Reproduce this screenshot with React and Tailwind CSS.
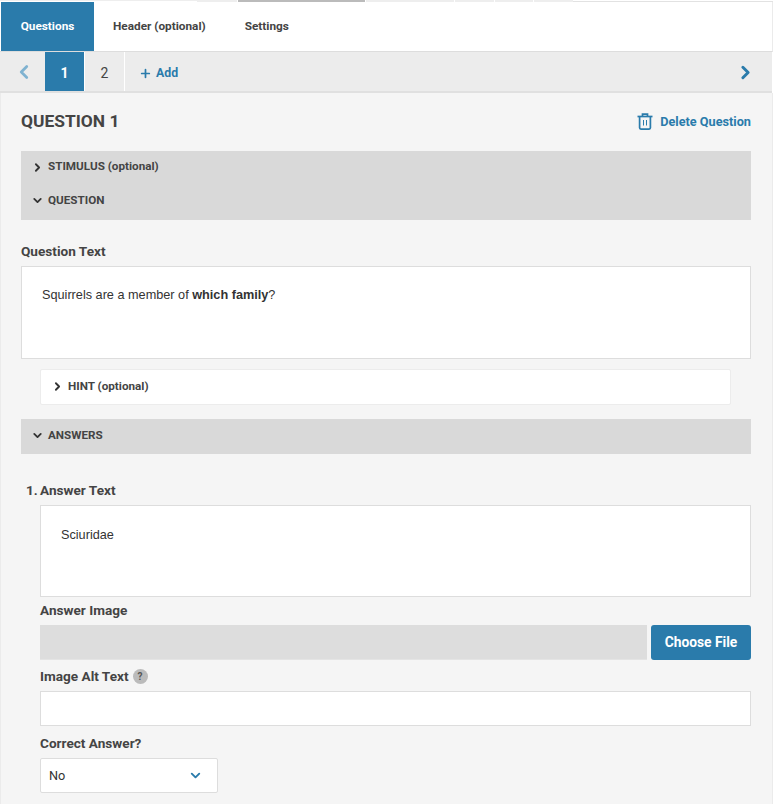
import React from "react";
import { ChevronLeft, ChevronRight, ChevronDown, Plus } from "lucide-react";

function Trash() {
  return (
    <svg width="16" height="17" viewBox="0 0 16 17" fill="none" stroke="#2a7bab" strokeWidth="1.7" className="shrink-0">
      <path d="M0.5 3.5h15" />
      <path d="M5.5 3.2V1.2h5v2" />
      <path d="M2.6 3.5v11.3a1.3 1.3 0 0 0 1.3 1.3h8.2a1.3 1.3 0 0 0 1.3-1.3V3.5" />
      <path d="M6.5 7v5.5M9.5 7v5.5" strokeWidth="1" />
    </svg>
  );
}

function Section({ open, children, className = "" }) {
  const Icon = open ? ChevronDown : ChevronRight;
  return (
    <div className={"flex items-center gap-[4px] pl-[10px] text-[11.7px] font-bold text-[#444] " + className}>
      <Icon size={13} strokeWidth={3.4} className="text-[#333]" />
      <span>{children}</span>
    </div>
  );
}

const label = "text-[13.6px] font-bold text-[#444] leading-[16px]";

export default function App() {
  return (
    <div className="w-[774px] h-[804px] overflow-hidden bg-white font-['Roboto',sans-serif]">
      <div className="flex h-[2px] w-[773px] items-start">
        <div className="w-[197px] h-[1px] bg-[#eeeeee]" />
        <div className="w-[40px] h-[2px] bg-[#eeeeee]" />
        <div className="w-[127px] h-[2px] ml-[1px] bg-[#bbbbbb]" />
        <div className="w-[88px] h-[2px] ml-[1px] bg-[#eeeeee]" />
        <div className="w-[39px] h-[2px] ml-[1px] bg-[#eeeeee]" />
        <div className="w-[38px] h-[2px] ml-[1px] bg-[#eeeeee]" />
        <div className="w-[39px] h-[2px] ml-[1px] bg-[#eeeeee]" />
        <div className="flex-1 h-[1px] mt-[1px] bg-[#e2e2e2]" />
      </div>
      <div className="flex h-[50px] w-[773px] border-b border-r border-b-[#dddddd] border-r-[#ebebeb] pl-[1px] text-[11.8px] font-bold">
        <div className="flex h-[49px] w-[93px] items-center justify-center bg-[#2a7bab] pt-[1px] text-white">Questions</div>
        <div className="flex h-[49px] items-center pl-[19px] pt-[1px] text-[#444]">Header (optional)</div>
        <div className="flex h-[49px] items-center pl-[39px] pt-[1px] text-[#444]">Settings</div>
      </div>
      <div className="flex h-[41px] w-[772px] items-stretch border-b-2 border-[#e0e0e0] bg-[#ececec]">
        <div className="flex w-[45px] items-center justify-center pt-[1px] pl-[3px]">
          <ChevronLeft size={22} strokeWidth={3} className="text-[#7fb2d0]" />
        </div>
        <div className="flex w-[39px] items-center justify-center bg-[#2a7bab] pt-[3px] text-[14px] font-bold text-white">1</div>
        <div className="flex w-[41px] items-center justify-center border-x border-white pt-[3px] text-[14px] text-[#444]">2</div>
        <div className="flex items-center gap-[4px] pl-[14px] pt-[4px] text-[12.3px] font-bold text-[#2a7bab]">
          <Plus size={13} strokeWidth={3.2} />
          <span>Add</span>
        </div>
        <div className="ml-auto flex items-center pr-[16px] pt-[1px]">
          <ChevronRight size={21} strokeWidth={3.4} className="text-[#2a7bab]" />
        </div>
      </div>
      <div className="w-[773px] h-[711px] border-x border-[#ebebeb] bg-[#f5f5f5] pl-[20px] pr-[21px]">
        <div className="flex h-[58px] items-center justify-between">
          <h2 className="pb-[2px] text-[17.4px] font-bold text-[#444]">QUESTION 1</h2>
          <div className="flex items-center gap-[7px] text-[12.7px] font-bold text-[#2a7bab]">
            <Trash />
            <span>Delete Question</span>
          </div>
        </div>
        <div className="h-[69px] bg-[#d9d9d9] flex flex-col">
          <Section className="h-[32px]">STIMULUS (optional)</Section>
          <Section open className="h-[35px]">QUESTION</Section>
        </div>
        <div className={label + " mt-[23px]"}>Question Text</div>
        <div className="mt-[7px] h-[93px] border border-[#dddddd] bg-white px-[20px] pt-[20px] font-['Liberation_Sans',sans-serif] text-[12.7px] leading-[16px] text-[#333]">
          Squirrels are a member of <b>which family</b>?
        </div>
        <div className="ml-[19px] mr-[20px] mt-[10px] h-[36px] flex items-center rounded-[2px] border border-[#ececec] bg-white">
          <Section>HINT (optional)</Section>
        </div>
        <div className="mt-[14px] flex h-[35px] items-center bg-[#d9d9d9]">
          <Section open className="pb-[1px]">ANSWERS</Section>
        </div>
        <div className="mt-[28px] flex pl-[5px] text-[13.6px] font-bold leading-[16px] text-[#444]">
          <span className="w-[14px]">1.</span>
          <span>Answer Text</span>
        </div>
        <div className="ml-[19px]">
          <div className="mt-[7px] h-[92px] border border-[#dddddd] bg-white px-[20px] pt-[21px] font-['Liberation_Sans',sans-serif] text-[12.7px] leading-[16px] text-[#333]">
            Sciuridae
          </div>
          <div className={label + " mt-[5px]"}>Answer Image</div>
          <div className="mt-[7px] flex h-[35px] gap-[4px]">
            <div className="flex-1 border-b border-[#e4e4e4] bg-[#dddddd]" />
            <button className="w-[100px] rounded-[3px] bg-[#2a7bab] text-[13.8px] font-bold text-white">Choose File</button>
          </div>
          <div className="mt-[8px] flex items-center gap-[4px]">
            <span className={label}>Image Alt Text</span>
            <span className="flex h-[15px] w-[15px] items-center justify-center rounded-full bg-[#bbbbbb] pt-[1px] text-[10px] font-bold text-[#555]">?</span>
          </div>
          <div className="mt-[7px] h-[35px] border border-[#dddddd] bg-white" />
          <div className={label + " mt-[9px]"}>Correct Answer?</div>
          <div className="mt-[7px] flex h-[35px] w-[178px] items-center justify-between rounded-[2px] border border-[#dddddd] bg-white pl-[8px] pr-[14px] text-[12.7px] text-[#333]">
            <span>No</span>
            <ChevronDown size={15} strokeWidth={3} className="text-[#2a7bab]" />
          </div>
        </div>
      </div>
    </div>
  );
}
